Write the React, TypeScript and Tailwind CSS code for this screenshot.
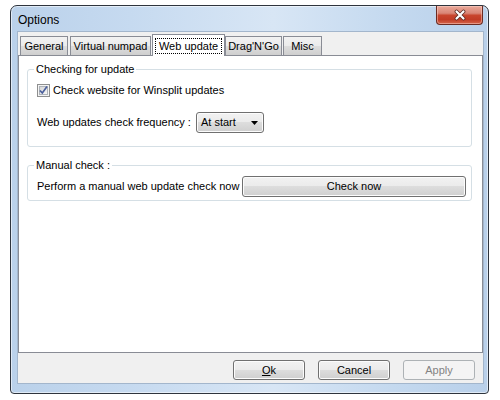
import React from "react";

function Checkbox() {
  return (
    <svg width="13" height="13" viewBox="0 0 13 13" className="shrink-0">
      <defs>
        <linearGradient id="cbg" x1="0" y1="0" x2="1" y2="1">
          <stop offset="0" stopColor="#d4d4d4" />
          <stop offset="1" stopColor="#f9f9f9" />
        </linearGradient>
      </defs>
      <rect x="0.5" y="0.5" width="12" height="12" fill="#f4f4f4" stroke="#8e8f8f" />
      <rect x="2.5" y="2.5" width="8" height="8" fill="url(#cbg)" stroke="#aeb3b9" />
      <path d="M3 6.5 L5.3 9 L10 2.6" fill="none" stroke="#4a5f9c" strokeWidth="1.7" />
    </svg>
  );
}

function Btn({ children, className = "", disabled = false }: { children: React.ReactNode; className?: string; disabled?: boolean }) {
  return (
    <div
      className={
        "h-[20px] flex items-center justify-center rounded-[3px] border " +
        (disabled
          ? "border-[#adb2b5] bg-[#f4f4f4] text-[#838383] "
          : "border-[#707070] bg-[linear-gradient(#f2f2f2_0%,#ebebeb_49%,#dddddd_50%,#cfcfcf_100%)] shadow-[inset_0_0_0_1px_#fcfcfc] text-black ") +
        className
      }
    >
      {children}
    </div>
  );
}

function Tab({ label, w, ml, selected = false }: { label: string; w: string; ml: string; selected?: boolean }) {
  if (selected) {
    return (
      <div className={`${w} ${ml} h-[22px] -mb-px relative z-10 bg-white border border-b-0 border-[#898c95] px-[2px] pt-[3px] pb-[2px] flex`}>
        <div className="flex-1 border border-dotted border-black flex items-center justify-center leading-[13px]">{label}</div>
      </div>
    );
  }
  return (
    <div className={`${w} ${ml} h-[19px] border border-b-0 border-[#898c95] bg-[linear-gradient(#f2f2f2_0%,#ebebeb_50%,#dddddd_51%,#cfcfcf_100%)] flex items-center justify-center leading-[13px] pt-[1px]`}>
      {label}
    </div>
  );
}

export default function App() {
  return (
    <div className="w-[500px] h-[400px] bg-white pl-[10px] pt-[5px] font-['Liberation_Sans',Arial,sans-serif] text-[11px] text-black">
      <div className="w-[479px] h-[389px] flex flex-col border border-[#2e343d] rounded-t-[7px] rounded-b-[4px] bg-[linear-gradient(90deg,#bad1ea_0%,#c6daf0_25%,#d8e6f5_55%,#c4d9ef_80%,#b9d0ea_100%)] shadow-[inset_0_0_0_1px_rgba(255,255,255,0.55)]">
        {/* Title bar */}
        <div className="h-[25px] flex items-start shrink-0">
          <div className="pl-[7px] pt-[7px] text-[12px] leading-[14px]">Options</div>
          <div className="flex-1" />
          <div className="mr-[5px] w-[47px] h-[19px] rounded-b-[4px] border border-t-0 border-[#6b2b22] bg-[linear-gradient(#eaa99a_0%,#d98676_40%,#c8452d_52%,#c13c26_75%,#d5654b_100%)] shadow-[inset_0_0_0_1px_rgba(255,220,210,0.45)] flex items-center justify-center">
            <svg width="14" height="12" viewBox="0 0 14 12">
              <path d="M3.5 2.5 L10.5 9.5 M10.5 2.5 L3.5 9.5" stroke="#5a2a22" strokeWidth="3.8" strokeLinecap="round" />
              <path d="M3.5 2.5 L10.5 9.5 M10.5 2.5 L3.5 9.5" stroke="#ffffff" strokeWidth="2.2" strokeLinecap="round" />
            </svg>
          </div>
        </div>
        {/* Client area */}
        <div className="flex-1 flex pl-[6px] pr-[4px] pb-[9px]">
          <div className="flex-1 flex flex-col border border-[#a3b6cc] bg-[#f0f0f0]">
            {/* Tabs */}
            <div className="h-[23px] flex items-end shrink-0">
              <Tab label="General" w="w-[48px]" ml="ml-[2px]" />
              <Tab label="Virtual numpad" w="w-[81px]" ml="ml-[2px]" />
              <Tab label="Web update" w="w-[73px]" ml="ml-[1px]" selected />
              <Tab label="Drag'N'Go" w="w-[57px]" ml="ml-0" />
              <Tab label="Misc" w="w-[39px]" ml="ml-[1px]" />
            </div>
            {/* Panel */}
            <div className="h-[298px] border border-[#898c95] bg-white pt-[5px] flex flex-col">
              <fieldset className="ml-[8px] mr-[10px] border border-[#d5dfe5] rounded-[3px] pl-[9px] pb-[13px]">
                <legend className="-ml-[3px] px-[2px] leading-[16px]">Checking for update</legend>
                <div className="mt-[6px] h-[14px] flex items-center gap-[3px]">
                  <Checkbox />
                  <span>Check website for Winsplit updates</span>
                </div>
                <div className="mt-[15px] h-[21px] flex items-center">
                  <span className="w-[159px]">Web updates check frequency :</span>
                  <div className="w-[68px] h-[21px] rounded-[3px] border border-[#707070] bg-[linear-gradient(#f2f2f2_0%,#ebebeb_49%,#dddddd_50%,#cfcfcf_100%)] shadow-[inset_0_0_0_1px_#fcfcfc] flex items-center pl-[4px] pr-[5px]">
                    <span className="flex-1">At start</span>
                    <svg width="7" height="4" viewBox="0 0 7 4">
                      <path d="M0 0 H7 L3.5 4 Z" fill="#000" />
                    </svg>
                  </div>
                </div>
              </fieldset>
              <fieldset className="mt-[10px] ml-[8px] mr-[10px] border border-[#d5dfe5] rounded-[3px] pl-[9px] pr-[5px] pb-[3px]">
                <legend className="-ml-[3px] px-[2px] leading-[16px]">Manual check :</legend>
                <div className="mt-[3px] h-[21px] flex items-center">
                  <span className="w-[205px]">Perform a manual web update check now</span>
                  <Btn className="flex-1 h-[21px]">Check now</Btn>
                </div>
              </fieldset>
            </div>
            {/* Footer */}
            <div className="flex-1 flex justify-end items-start pt-[7px] pr-[8px] gap-[13px]">
              <Btn className="w-[72px]">
                <span><span className="underline">O</span>k</span>
              </Btn>
              <Btn className="w-[72px]">Cancel</Btn>
              <Btn className="w-[72px]" disabled>Apply</Btn>
            </div>
          </div>
        </div>
      </div>
    </div>
  );
}
